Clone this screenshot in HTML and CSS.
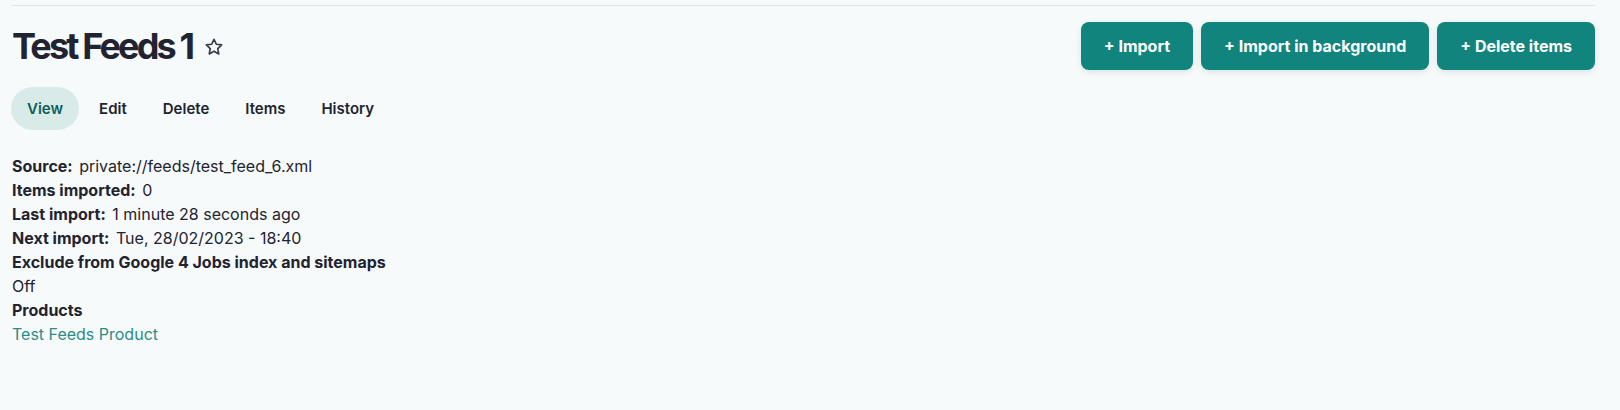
FILE: index.html
```html
<!DOCTYPE html>
<html lang="en">
<head>
    <meta charset="UTF-8">
    <meta name="viewport" content="width=device-width, initial-scale=1.0">
    <title>Test Feeds 1</title>
    <link rel="stylesheet" href="styles.css">
</head>
<body>
    <div class="page">
        <div class="header">
            <div class="title_wrap">
                <h1 class="title">Test Feeds 1</h1>
                <svg class="star" width="20" height="20" viewBox="0 0 24 24" fill="none" stroke="#3b3b45" stroke-width="2" stroke-linejoin="round"><path d="M12 2.8l2.8 5.9 6.4.8-4.7 4.4 1.2 6.4L12 17.2l-5.7 3.1 1.2-6.4-4.7-4.4 6.4-.8z"/></svg>
            </div>
            <div class="actions">
                <a class="button" href="#">+ Import</a>
                <a class="button" href="#">+ Import in background</a>
                <a class="button" href="#">+ Delete items</a>
            </div>
        </div>

        <div class="tabs">
            <a class="tab active" href="#">View</a>
            <a class="tab" href="#">Edit</a>
            <a class="tab" href="#">Delete</a>
            <a class="tab" href="#">Items</a>
            <a class="tab" href="#">History</a>
        </div>

        <div class="details">
            <div><span class="label">Source:</span> private://feeds/test_feed_6.xml</div>
            <div><span class="label">Items imported:</span> 0</div>
            <div><span class="label">Last import:</span> 1 minute 28 seconds ago</div>
            <div><span class="label">Next import:</span> Tue, 28/02/2023 - 18:40</div>
            <div class="label">Exclude from Google 4 Jobs index and sitemaps</div>
            <div>Off</div>
            <div class="label">Products</div>
            <div><a class="link" href="#">Test Feeds Product</a></div>
        </div>
    </div>
</body>
</html>
```

FILE: styles.css
```css
body{
    margin: 0;
    background-color: #f7fafb;
    font-family: Inter, "Noto Sans", sans-serif;
    color: #222330;
}
.page{
    margin: 5px 25px 0 11px;
    border-top: 1px solid #e1e5e8;
}
.header{
    display: flex;
    justify-content: space-between;
    align-items: center;
    padding-top: 16px;
}
.title_wrap{
    display: flex;
    align-items: center;
    gap: 12px;
    padding-left: 1px;
}
.title{
    margin: 0;
    font-size: 36px;
    font-weight: 700;
    letter-spacing: -2.85px;
    line-height: 1.3;
}
.star{
    margin-top: 2px;
}
.actions{
    display: flex;
    gap: 8px;
}
.button{
    display: flex;
    align-items: center;
    height: 48px;
    padding: 0 23px;
    border-radius: 8px;
    background-color: #11857d;
    color: #fff;
    font-size: 16px;
    font-weight: 700;
    text-decoration: none;
    box-shadow: 0 2px 6px rgba(0, 60, 60, 0.12);
}
.tabs{
    display: flex;
    gap: 4px;
    margin-top: 17px;
}
.tab{
    display: flex;
    align-items: center;
    height: 43px;
    padding: 0 16px;
    border-radius: 22px;
    color: #222330;
    font-size: 15px;
    font-weight: 600;
    text-decoration: none;
}
.tab.active{
    background-color: #d8ebe9;
    color: #0e5f59;
}
.details{
    margin-top: 24px;
    padding-left: 1px;
    font-size: 16px;
    line-height: 24px;
}
.label{
    font-weight: 700;
    margin-right: 2px;
}
.link{
    color: #2a8c86;
    text-decoration: none;
}
```
